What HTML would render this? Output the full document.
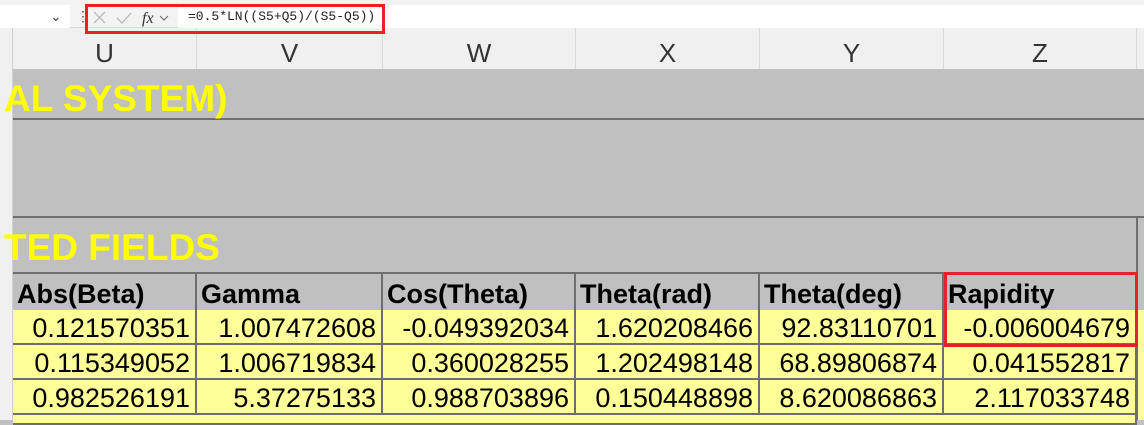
<!DOCTYPE html><html><head><style>
body{margin:0;width:1144px;height:420px;overflow:hidden;background:#c0c0c0;font-family:"Liberation Sans",Arial,sans-serif;position:relative}
div{position:absolute;box-sizing:border-box}
.h{top:28px;height:41px;background:#f0f0f0;border-right:1px solid #dadada;font-size:26px;color:#333;text-align:center;line-height:50px}
.t{color:#ffff00;font-weight:bold;font-size:37px}
.hd{top:272px;height:38px;border-right:2px solid #6e6e6e;border-top:2px solid #6e6e6e;font-weight:bold;font-size:27px;line-height:40px;padding-left:4px;color:#000;background:#c0c0c0;white-space:nowrap;overflow:hidden}
.d{height:35px;background:#ffff99;border-right:2px solid #6e6e6e;border-bottom:2px solid #6e6e6e;font-size:27px;text-align:right;padding-right:5px;line-height:36px;color:#000;white-space:nowrap}
</style></head><body>
<div style="left:0;top:0;width:1144px;height:28px;background:#f3f3f3;border-bottom:1px solid #d8d8d8"></div>
<div style="left:0;top:5px;width:70px;height:23px;background:#fff"></div>
<div style="left:50px;top:8px;font-size:14px;color:#444">&#8964;</div>
<div style="left:76px;top:8px;font-size:14px;color:#444">&#8942;</div>
<div style="left:178px;top:5px;width:966px;height:23px;background:#fff"></div>
<div style="left:188px;top:9px;font-family:'Liberation Mono',monospace;font-size:13px;color:#222">=0.5*LN((S5+Q5)/(S5-Q5))</div>
<svg style="position:absolute;left:92px;top:9px" width="90" height="18"><path d="M2 3l11 11M13 3L2 14" stroke="#bbb" stroke-width="1.3" fill="none"/><path d="M25 9l5 5 9-10" stroke="#bbb" stroke-width="1.3" fill="none"/><text x="50" y="14" font-family="Liberation Serif" font-style="italic" font-size="16" fill="#333">fx</text><path d="M68 7l4 4 4-4" stroke="#666" fill="none"/></svg>
<div class="h" style="left:13px;width:184px">U</div>
<div class="h" style="left:197px;width:186px">V</div>
<div class="h" style="left:383px;width:193px">W</div>
<div class="h" style="left:576px;width:184px">X</div>
<div class="h" style="left:760px;width:184px">Y</div>
<div class="h" style="left:944px;width:193px">Z</div>
<div class="h" style="left:1137px;width:10px"></div>
<div style="left:0;top:28px;width:13px;height:392px;background:#f0f0f0;border-right:1px solid #d0d0d0"></div>
<div style="left:85px;top:4px;width:300px;height:30px;border:3px solid #e8202a;z-index:5"></div>
<div style="left:13px;top:118px;width:1131px;height:2px;background:#6e6e6e"></div>
<div style="left:13px;top:216px;width:1131px;height:2px;background:#6e6e6e"></div>
<div style="left:1136px;top:218px;width:2px;height:202px;background:#6e6e6e"></div>
<div class="t" style="left:4px;top:78px">AL SYSTEM)</div>
<div class="t" style="left:4px;top:227px">TED FIELDS</div>
<div class="hd" style="left:13px;width:184px">Abs(Beta)</div>
<div class="hd" style="left:197px;width:186px">Gamma</div>
<div class="hd" style="left:383px;width:193px">Cos(Theta)</div>
<div class="hd" style="left:576px;width:184px">Theta(rad)</div>
<div class="hd" style="left:760px;width:184px">Theta(deg)</div>
<div class="hd" style="left:944px;width:193px">Rapidity</div>
<div class="d" style="left:13px;top:310px;width:184px">0.121570351</div>
<div class="d" style="left:197px;top:310px;width:186px">1.007472608</div>
<div class="d" style="left:383px;top:310px;width:193px">-0.049392034</div>
<div class="d" style="left:576px;top:310px;width:184px">1.620208466</div>
<div class="d" style="left:760px;top:310px;width:184px">92.83110701</div>
<div class="d" style="left:944px;top:310px;width:193px">-0.006004679</div>
<div class="d" style="left:13px;top:345px;width:184px">0.115349052</div>
<div class="d" style="left:197px;top:345px;width:186px">1.006719834</div>
<div class="d" style="left:383px;top:345px;width:193px">0.360028255</div>
<div class="d" style="left:576px;top:345px;width:184px">1.202498148</div>
<div class="d" style="left:760px;top:345px;width:184px">68.89806874</div>
<div class="d" style="left:944px;top:345px;width:193px">0.041552817</div>
<div class="d" style="left:13px;top:380px;width:184px">0.982526191</div>
<div class="d" style="left:197px;top:380px;width:186px">5.37275133</div>
<div class="d" style="left:383px;top:380px;width:193px">0.988703896</div>
<div class="d" style="left:576px;top:380px;width:184px">0.150448898</div>
<div class="d" style="left:760px;top:380px;width:184px">8.620086863</div>
<div class="d" style="left:944px;top:380px;width:193px">2.117033748</div>
<div class="d" style="left:13px;top:415px;width:1124px;height:10px;text-align:left"></div>
<div class="d" style="left:1138px;top:310px;width:10px;height:110px;border:none"></div>
<div style="left:944px;top:272px;width:194px;height:75px;border:3px solid #e8202a;z-index:5"></div>
</body></html>
